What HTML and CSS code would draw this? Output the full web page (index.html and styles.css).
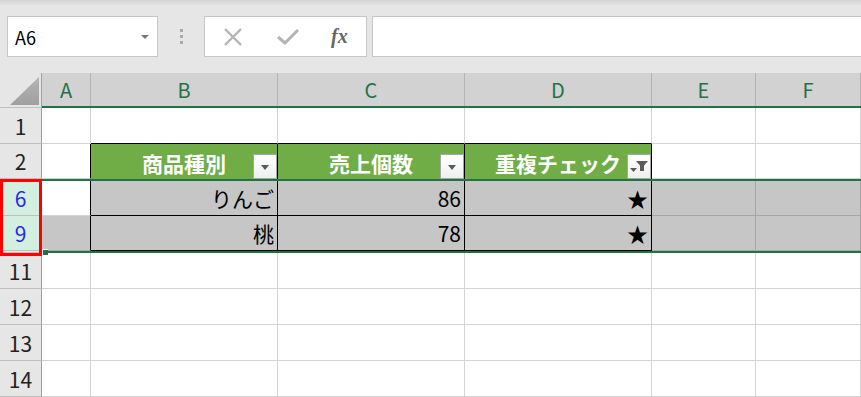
FILE: index.html
```html
<!DOCTYPE html>
<html lang="ja">
  <head>
    <meta charset="UTF-8" />
    <meta name="viewport" content="width=device-width, initial-scale=1.0" />
    <title>フィルター | 重複チェック</title>
    <link rel="stylesheet" href="styles.css">
  </head>
  <body>

    <div class="toolbar">
      <div class="strip"></div>
      <div class="bar">
        <div class="namebox">
          <span>A6</span>
          <span class="caret"></span>
        </div>
        <div class="grip"><i></i><i></i><i></i></div>
        <div class="fbtns">
          <svg width="20" height="18" viewBox="0 0 20 18">
            <path d="M2 1 L18 17 M18 1 L2 17" stroke="#b4b4b4" stroke-width="2.4" fill="none" />
          </svg>
          <svg width="22" height="16" viewBox="0 0 22 16">
            <path d="M1 8 L8 14 L21 1" stroke="#b4b4b4" stroke-width="3" fill="none" />
          </svg>
          <span class="fx">fx</span>
        </div>
        <div class="finput"></div>
      </div>
    </div>

    <div class="sheet">
      <!-- column headers -->
      <div class="corner"><span class="tri"></span></div>
      <div class="ch">A</div>
      <div class="ch">B</div>
      <div class="ch">C</div>
      <div class="ch">D</div>
      <div class="ch">E</div>
      <div class="ch">F</div>
      <div class="sep-h"></div>
      <div class="sep"></div>

      <!-- row 1 -->
      <div class="rh">1</div>
      <div class="c"></div>
      <div class="c tb"></div>
      <div class="c tb"></div>
      <div class="c tb"></div>
      <div class="c"></div>
      <div class="c"></div>

      <!-- row 2 -->
      <div class="rh">2</div>
      <div class="c tl"></div>
      <div class="th">商品種別<span class="fbtn"><span class="down"></span></span></div>
      <div class="th">売上個数<span class="fbtn"><span class="down"></span></span></div>
      <div class="th">重複チェック<span class="fbtn">
        <svg width="22" height="23" viewBox="0 0 22 23">
          <path d="M8 6 H20 L16 10.5 V16 H12 V10.5 Z" fill="#5a5a5a" />
          <path d="M2 13 H9 L5.5 17 Z" fill="#5a5a5a" />
        </svg>
      </span></div>
      <div class="c"></div>
      <div class="c"></div>
      <div class="sep-h"></div>
      <div class="sep"></div>

      <!-- row 6 -->
      <div class="rh sel">6</div>
      <div class="c tl"></div>
      <div class="td">りんご</div>
      <div class="td">86</div>
      <div class="td">★</div>
      <div class="g"></div>
      <div class="g"></div>

      <!-- row 9 -->
      <div class="rh sel">9</div>
      <div class="g tl"></div>
      <div class="td">桃</div>
      <div class="td">78</div>
      <div class="td">★</div>
      <div class="g"></div>
      <div class="g"></div>
      <div class="sep-h"></div>
      <div class="sep"></div>

      <!-- rows 11 - 14 -->
      <div class="rh">11</div>
      <div class="c"></div><div class="c"></div><div class="c"></div><div class="c"></div><div class="c"></div><div class="c"></div>
      <div class="rh">12</div>
      <div class="c"></div><div class="c"></div><div class="c"></div><div class="c"></div><div class="c"></div><div class="c"></div>
      <div class="rh">13</div>
      <div class="c"></div><div class="c"></div><div class="c"></div><div class="c"></div><div class="c"></div><div class="c"></div>
      <div class="rh">14</div>
      <div class="c"></div><div class="c"></div><div class="c"></div><div class="c"></div><div class="c"></div><div class="c"></div>

      <div class="mark"></div>
      <div class="handle"></div>
    </div>

  </body>
</html>
```

FILE: styles.css
```css
* {
  margin: 0;
  padding: 0;
  box-sizing: border-box;
  font-family: "Noto Sans CJK JP", sans-serif;
}
body {
  background-color: #ffffff;
  width: 861px;
  height: 397px;
  overflow: hidden;
}


.toolbar {
  height: 73px;
  background: #e6e6e6;
}
.strip {
  height: 5px;
  background: linear-gradient(#d4d4d4, #e2e2e2);
}
.bar {
  display: flex;
  align-items: center;
  padding: 11px 0 0 7px;
  height: 52px;
}
.namebox {
  width: 151px;
  height: 41px;
  background: white;
  border: 1px solid #c6c6c6;
  display: flex;
  align-items: center;
  justify-content: space-between;
  padding: 0 8px 0 7px;
  font-family: "Liberation Sans", sans-serif;
  font-size: 18px;
  color: #000;
}
.caret {
  width: 0;
  height: 0;
  border-left: 4px solid transparent;
  border-right: 4px solid transparent;
  border-top: 4px solid #777;
}
.grip {
  width: 46px;
  display: flex;
  flex-direction: column;
  align-items: center;
  gap: 3px;
}
.grip i {
  display: block;
  width: 3px;
  height: 3px;
  background: #a9a9a9;
}
.fbtns {
  width: 163px;
  height: 41px;
  background: white;
  border: 1px solid #c6c6c6;
  display: flex;
  align-items: center;
  padding-left: 18px;
  gap: 34px;
}
.fx {
  font-family: "Liberation Serif", serif;
  font-style: italic;
  font-weight: bold;
  font-size: 20px;
  color: #666;
  margin-left: -2px;
}
.finput {
  flex: 1;
  height: 41px;
  margin-left: 5px;
  background: white;
  border: 1px solid #c6c6c6;
  border-right: none;
}


.sheet {
  position: relative;
  display: grid;
  grid-template-columns: 42px 49px 187px 187px 187px 104px 1fr;
  grid-template-rows: 33px 2px 36px 35px 2px 35px 35px 2px 36px 36px 36px 36px;
  font-size: 21px;
}
.corner {
  background: #e6e6e6;
  border-right: 1px solid #9e9e9e;
  position: relative;
}
.tri {
  position: absolute;
  right: 2px;
  bottom: 1px;
  width: 29px;
  height: 28px;
  background: linear-gradient(#b4b4b4, #a0a0a0);
  clip-path: polygon(100% 0, 100% 100%, 0 100%);
}
.ch {
  background: #d2d2d2;
  color: #217346;
  border-right: 1px solid #b4b4b4;
  display: flex;
  align-items: center;
  justify-content: center;
  font-size: 20px;
}
.sep-h {
  background: #e6e6e6;
  border-right: 1px solid #9e9e9e;
  border-bottom: 1px solid #bfbfbf;
}
.sep {
  grid-column: 2 / -1;
  background: #217346;
}
.rh {
  background: #e6e6e6;
  border-right: 1px solid #9e9e9e;
  border-bottom: 1px solid #bfbfbf;
  display: flex;
  align-items: center;
  justify-content: center;
  color: #222;
}
.rh.sel {
  background: #d3efdf;
  color: #2a2ae6;
}


.c {
  background: white;
  border-right: 1px solid #d4d4d4;
  border-bottom: 1px solid #d4d4d4;
}
.c.tb {
  border-bottom-color: #000;
}
.tl {
  border-right: 1px solid #000;
}
.g {
  background: #c6c6c6;
  border-right: 1px solid #a6a6a6;
  border-bottom: 1px solid #a6a6a6;
}
.g.tl {
  border-right-color: #000;
}
.th {
  position: relative;
  background: #70ad47;
  color: white;
  font-weight: bold;
  border-right: 1px solid #000;
  display: flex;
  align-items: center;
  justify-content: center;
  padding-top: 2px;
}
.fbtn {
  position: absolute;
  right: 0;
  bottom: 0;
  width: 24px;
  height: 25px;
  background: linear-gradient(#ffffff, #eef0ee);
  border: 1px solid #a6a6a6;
  display: flex;
  align-items: center;
  justify-content: center;
}
.down {
  width: 0;
  height: 0;
  border-left: 4px solid transparent;
  border-right: 4px solid transparent;
  border-top: 5px solid #5a5a5a;
  margin-top: 2px;
}
.td {
  background: #c6c6c6;
  color: #000;
  border-right: 1px solid #000;
  border-bottom: 1px solid #000;
  display: flex;
  align-items: center;
  justify-content: flex-end;
  padding-right: 3px;
}


.mark {
  position: absolute;
  left: 0;
  top: 106px;
  width: 42px;
  height: 77px;
  border: 3px solid #ff0000;
}
.handle {
  position: absolute;
  left: 42px;
  top: 176px;
  width: 6px;
  height: 6px;
  background: #217346;
  border-left: 1px solid white;
  border-top: 1px solid white;
}
```
